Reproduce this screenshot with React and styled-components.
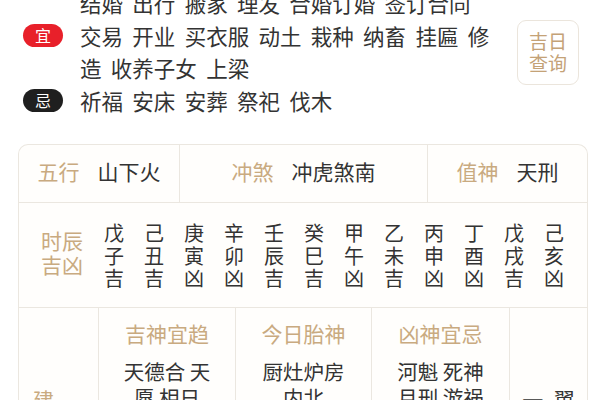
import React from 'react';
import styled, { createGlobalStyle } from 'styled-components';

const GlobalStyle = createGlobalStyle`
  html, body {
    margin: 0;
    padding: 0;
    background: #ffffff;
  }
  body {
    font-family: "Noto Sans CJK SC", "Noto Sans", sans-serif;
    color: #333333;
    overflow: hidden;
  }
`;

const Page = styled.div`
  width: 600px;
  height: 400px;
  overflow: hidden;
`;

const Scroller = styled.div`
  margin-top: -13px;
`;

const TopSection = styled.div`
  display: flex;
  align-items: center;
  padding: 0 21px 0 23px;
  gap: 25px;
`;

const ListColumn = styled.div`
  flex: 1;
  display: flex;
  flex-direction: column;
`;

const ListRow = styled.div`
  display: flex;
  align-items: center;
  gap: 17px;
`;

const Badge = styled.div`
  flex: none;
  width: 40px;
  height: 23px;
  border-radius: 12px;
  background: ${(p) => (p.$bad ? '#1f1f1f' : '#e8202a')};
  color: #ffffff;
  font-size: 16px;
  line-height: 23px;
  text-align: center;
`;

const ListText = styled.div`
  flex: 1;
  font-size: 21.5px;
  line-height: 32.5px;
  word-spacing: 4.5px;
  color: #333333;
`;

const QueryButton = styled.button`
  flex: none;
  width: 62px;
  height: 65px;
  border: 1.5px solid #ebe5dc;
  border-radius: 9px;
  background: #ffffff;
  color: #c4a277;
  font-family: inherit;
  font-size: 19px;
  line-height: 22px;
  padding: 0;
`;

const Table = styled.div`
  margin: 27px 12px 0 18px;
  border: 1px solid #ebe7e0;
  border-bottom: none;
  border-radius: 10px 10px 0 0;
  background: #fffefc;
`;

const InfoRow = styled.div`
  display: grid;
  grid-template-columns: 160px 248px 1fr;
  height: 57px;
  border-bottom: 1px solid #ebe7e0;
`;

const InfoCell = styled.div`
  display: flex;
  align-items: center;
  justify-content: center;
  gap: 18px;
  padding-bottom: 5px;
  font-size: 21px;
  border-left: ${(p) => (p.$first ? 'none' : '1px solid #ebe7e0')};
`;

const Label = styled.span`
  color: #c9aa80;
`;

const Value = styled.span`
  color: #333333;
`;

const HourRow = styled.div`
  display: flex;
  align-items: center;
  height: 104px;
  padding-left: 22px;
  border-bottom: 1px solid #ebe7e0;
`;

const HourLabel = styled.div`
  width: 43px;
  font-size: 21px;
  line-height: 24px;
  color: #c9aa80;
  margin-right: 20px;
  margin-bottom: 6px;
`;

const HourGrid = styled.div`
  display: flex;
  gap: 20px;
  margin-top: 2px;
`;

const HourCol = styled.div`
  width: 20px;
  display: flex;
  flex-direction: column;
  font-size: 20px;
  line-height: 22.5px;
  text-align: center;
  color: #333333;
`;

const GodRow = styled.div`
  display: grid;
  grid-template-columns: 79px 137px 136px 138px 1fr;
  height: 140px;
`;

const GodCell = styled.div`
  border-left: 1px solid #ebe7e0;
  padding-top: 12px;
  text-align: center;
`;

const SideCell = styled.div`
  border-left: ${(p) => (p.$first ? 'none' : '1px solid #ebe7e0')};
  padding-top: 78px;
  padding-left: ${(p) => (p.$first ? '14px' : '0')};
  text-align: ${(p) => (p.$first ? 'left' : 'center')};
  font-size: 21px;
  line-height: 26px;
  color: ${(p) => (p.$gold ? '#c9aa80' : '#333333')};
  word-spacing: 6px;
`;

const GodTitle = styled.div`
  font-size: 21px;
  line-height: 26px;
  color: #c9aa80;
  margin-bottom: 12px;
`;

const GodLine = styled.div`
  font-size: 20.5px;
  line-height: 26px;
  color: #333333;
  white-space: nowrap;
`;

const hours = [
  ['戊', '子', '吉'],
  ['己', '丑', '吉'],
  ['庚', '寅', '凶'],
  ['辛', '卯', '凶'],
  ['壬', '辰', '吉'],
  ['癸', '巳', '吉'],
  ['甲', '午', '凶'],
  ['乙', '未', '吉'],
  ['丙', '申', '凶'],
  ['丁', '酉', '凶'],
  ['戊', '戌', '吉'],
  ['己', '亥', '凶'],
];

const gods = [
  { title: '吉神宜趋', lines: ['天德合 天', '愿 相日', '六合 五富'] },
  { title: '今日胎神', lines: ['厨灶炉房', '内北'] },
  { title: '凶神宜忌', lines: ['河魁 死神', '月刑 游祸', '天吏'] },
];

export default function App() {
  return (
    <Page>
      <GlobalStyle />
      <Scroller>
        <TopSection>
          <ListColumn>
            <ListRow>
              <Badge>宜</Badge>
              <ListText>
                结婚 出行 搬家 理发 合婚订婚 签订合同 交易 开业 买衣服 动土 栽种 纳畜 挂匾 修造 收养子女 上梁
              </ListText>
            </ListRow>
            <ListRow>
              <Badge $bad>忌</Badge>
              <ListText>祈福 安床 安葬 祭祀 伐木</ListText>
            </ListRow>
          </ListColumn>
          <QueryButton>
            吉日
            <br />
            查询
          </QueryButton>
        </TopSection>

        <Table>
          <InfoRow>
            <InfoCell $first>
              <Label>五行</Label>
              <Value>山下火</Value>
            </InfoCell>
            <InfoCell>
              <Label>冲煞</Label>
              <Value>冲虎煞南</Value>
            </InfoCell>
            <InfoCell>
              <Label>值神</Label>
              <Value>天刑</Value>
            </InfoCell>
          </InfoRow>

          <HourRow>
            <HourLabel>
              时辰
              <br />
              吉凶
            </HourLabel>
            <HourGrid>
              {hours.map((h, i) => (
                <HourCol key={i}>
                  {h.map((c, j) => (
                    <span key={j}>{c}</span>
                  ))}
                </HourCol>
              ))}
            </HourGrid>
          </HourRow>

          <GodRow>
            <SideCell $first $gold>建</SideCell>
            {gods.map((g) => (
              <GodCell key={g.title}>
                <GodTitle>{g.title}</GodTitle>
                {g.lines.map((l) => (
                  <GodLine key={l}>{l}</GodLine>
                ))}
              </GodCell>
            ))}
            <SideCell>一 翼</SideCell>
          </GodRow>
        </Table>
      </Scroller>
    </Page>
  );
}
